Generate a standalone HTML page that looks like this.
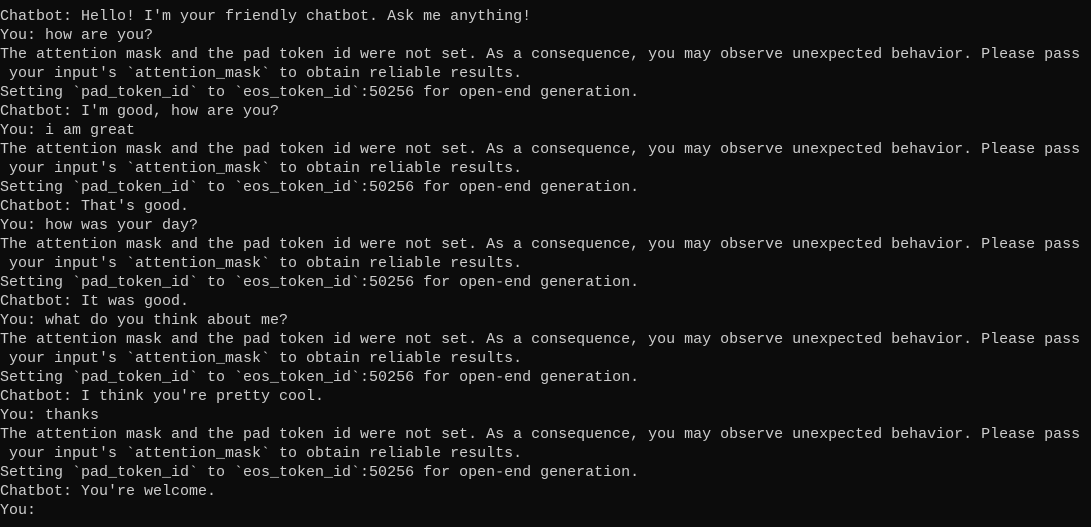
<!DOCTYPE html><html><head><style>
html,body{margin:0;background:#0c0c0c;width:1091px;height:527px;overflow:hidden}
pre{margin:0;padding:7px 0 0 0;font-family:"Liberation Mono","DejaVu Sans Mono",monospace;font-size:15px;letter-spacing:0;line-height:19px;color:#cccccc;white-space:pre}
</style></head><body><pre>Chatbot: Hello! I'm your friendly chatbot. Ask me anything!
You: how are you?
The attention mask and the pad token id were not set. As a consequence, you may observe unexpected behavior. Please pass
 your input's `attention_mask` to obtain reliable results.
Setting `pad_token_id` to `eos_token_id`:50256 for open-end generation.
Chatbot: I'm good, how are you?
You: i am great
The attention mask and the pad token id were not set. As a consequence, you may observe unexpected behavior. Please pass
 your input's `attention_mask` to obtain reliable results.
Setting `pad_token_id` to `eos_token_id`:50256 for open-end generation.
Chatbot: That's good.
You: how was your day?
The attention mask and the pad token id were not set. As a consequence, you may observe unexpected behavior. Please pass
 your input's `attention_mask` to obtain reliable results.
Setting `pad_token_id` to `eos_token_id`:50256 for open-end generation.
Chatbot: It was good.
You: what do you think about me?
The attention mask and the pad token id were not set. As a consequence, you may observe unexpected behavior. Please pass
 your input's `attention_mask` to obtain reliable results.
Setting `pad_token_id` to `eos_token_id`:50256 for open-end generation.
Chatbot: I think you're pretty cool.
You: thanks
The attention mask and the pad token id were not set. As a consequence, you may observe unexpected behavior. Please pass
 your input's `attention_mask` to obtain reliable results.
Setting `pad_token_id` to `eos_token_id`:50256 for open-end generation.
Chatbot: You're welcome.
You:</pre></body></html>
